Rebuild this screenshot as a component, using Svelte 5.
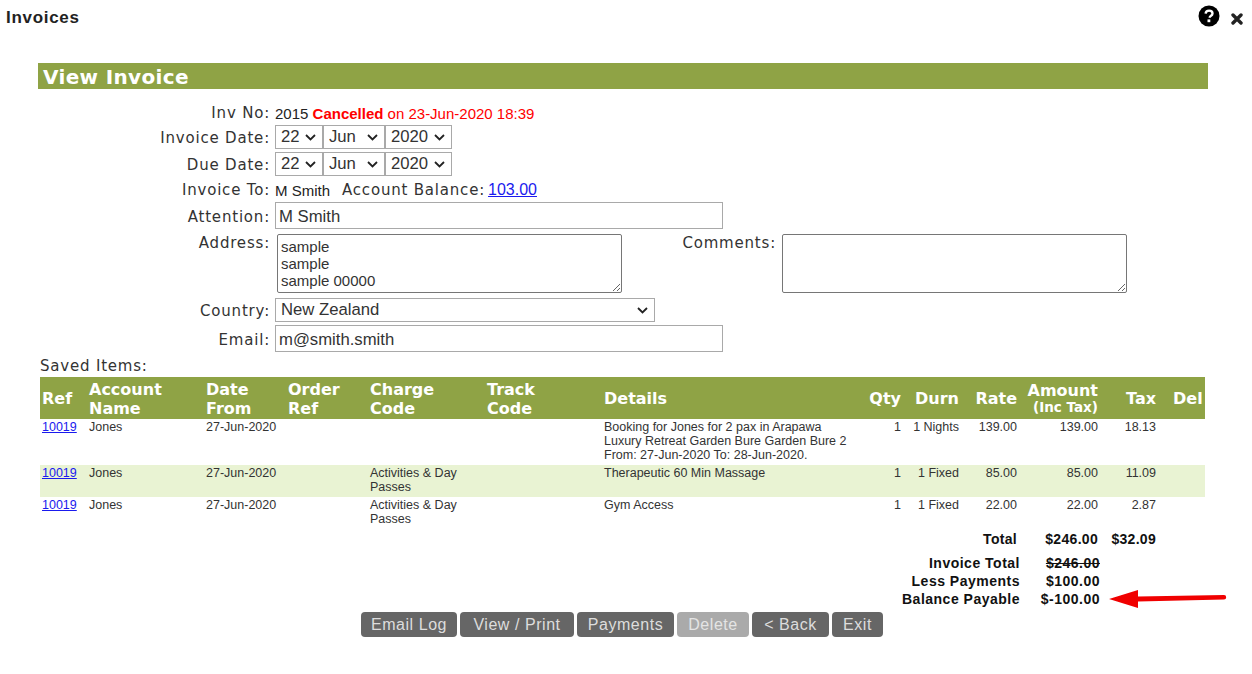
<script>
    const items = [
        { ref: '10019', name: 'Jones', from: '27-Jun-2020', charge: '', details: ['Booking for Jones for 2 pax in Arapawa', 'Luxury Retreat Garden Bure Garden Bure 2', 'From: 27-Jun-2020 To: 28-Jun-2020.'], qty: 1, durn: '1 Nights', rate: '139.00', amount: '139.00', tax: '18.13' },
        { ref: '10019', name: 'Jones', from: '27-Jun-2020', charge: 'Activities & Day Passes', details: ['Therapeutic 60 Min Massage'], qty: 1, durn: '1 Fixed', rate: '85.00', amount: '85.00', tax: '11.09' },
        { ref: '10019', name: 'Jones', from: '27-Jun-2020', charge: 'Activities & Day Passes', details: ['Gym Access'], qty: 1, durn: '1 Fixed', rate: '22.00', amount: '22.00', tax: '2.87' }
    ];

    const buttons = [
        { label: 'Email Log', width: 96 },
        { label: 'View / Print', width: 114 },
        { label: 'Payments', width: 97 },
        { label: 'Delete', width: 72, disabled: true },
        { label: '< Back', width: 77 },
        { label: 'Exit', width: 51 }
    ];
</script>

<div class="page">
    <header class="topbar">
        <span class="title">Invoices</span>
        <div class="tools">
            <svg class="help" width="22" height="22" viewBox="0 0 22 22">
                <circle cx="11" cy="11" r="10.5" fill="#000" />
                <path d="M7.6 8.6c.2-2 1.6-3 3.5-3 2 0 3.4 1.1 3.4 2.8 0 1.4-.8 2-1.8 2.7-.8.5-1 .9-1 1.7" fill="none" stroke="#fff" stroke-width="2.4" />
                <rect x="9.5" y="14.4" width="2.8" height="2.8" fill="#fff" />
            </svg>
            <svg class="close" width="12" height="12" viewBox="0 0 12 12">
                <path d="M2 2l8 8M10 2l-8 8" stroke="#222" stroke-width="3.4" stroke-linecap="round" />
            </svg>
        </div>
    </header>

    <main class="panel">
        <h1>View Invoice</h1>

        <div class="form">
            <div class="row inv">
                <span class="label">Inv No:</span>
                <span class="value">2015 <span class="cancel"><b>Cancelled</b> on 23-Jun-2020 18:39</span></span>
            </div>
            <div class="row date">
                <span class="label low">Invoice Date:</span>
                <div class="dates">
                    <select class="d"><option>22</option></select>
                    <select class="m"><option>Jun</option></select>
                    <select class="y"><option>2020</option></select>
                </div>
            </div>
            <div class="row date">
                <span class="label low">Due Date:</span>
                <div class="dates">
                    <select class="d"><option>22</option></select>
                    <select class="m"><option>Jun</option></select>
                    <select class="y"><option>2020</option></select>
                </div>
            </div>
            <div class="row to">
                <span class="label">Invoice To:</span>
                <span class="value small">M Smith</span>
                <span class="label-inline">Account Balance:</span>
                <a href="#balance" class="balance">103.00</a>
            </div>
            <div class="row attention">
                <span class="label low">Attention:</span>
                <input class="wide" value="M Smith" />
            </div>
            <div class="row address">
                <span class="label">Address:</span>
                <textarea class="addr">sample
sample
sample 00000</textarea>
                <span class="label comments">Comments:</span>
                <textarea class="comm"></textarea>
            </div>
            <div class="row country">
                <span class="label low">Country:</span>
                <select class="country-select"><option>New Zealand</option></select>
            </div>
            <div class="row email">
                <span class="label low">Email:</span>
                <input class="wide" value="m@smith.smith" />
            </div>
        </div>

        <div class="saved">Saved Items:</div>

        <table>
            <colgroup>
                <col style="width:47px" /><col style="width:117px" /><col style="width:82px" /><col style="width:82px" /><col style="width:117px" /><col style="width:117px" /><col style="width:263px" /><col style="width:36px" /><col style="width:58px" /><col style="width:58px" /><col style="width:81px" /><col style="width:58px" /><col style="width:49px" />
            </colgroup>
            <thead>
                <tr>
                    <th>Ref</th>
                    <th>Account Name</th>
                    <th>Date From</th>
                    <th>Order Ref</th>
                    <th>Charge Code</th>
                    <th>Track<br />Code</th>
                    <th>Details</th>
                    <th class="num">Qty</th>
                    <th class="num">Durn</th>
                    <th class="num">Rate</th>
                    <th class="num amount">Amount<small>(Inc Tax)</small></th>
                    <th class="num">Tax</th>
                    <th class="del">Del</th>
                </tr>
            </thead>
            <tbody>
                {#each items as item, i}
                    <tr class:alt={i === 1}>
                        <td><a href="#ref">{item.ref}</a></td>
                        <td>{item.name}</td>
                        <td>{item.from}</td>
                        <td></td>
                        <td>{item.charge}</td>
                        <td></td>
                        <td>{#each item.details as line}<div>{line}</div>{/each}</td>
                        <td class="num">{item.qty}</td>
                        <td class="num">{item.durn}</td>
                        <td class="num">{item.rate}</td>
                        <td class="num">{item.amount}</td>
                        <td class="num">{item.tax}</td>
                        <td></td>
                    </tr>
                {/each}
            </tbody>
            <tfoot>
                <tr>
                    <td colspan="10" class="num">Total</td>
                    <td class="num">$246.00</td>
                    <td class="num">$32.09</td>
                    <td></td>
                </tr>
            </tfoot>
        </table>

        <div class="summary">
            <span>Invoice Total</span><s>$246.00</s>
            <span>Less Payments</span><span>$100.00</span>
            <span>Balance Payable</span><span>$-100.00</span>
            <svg class="arrow" width="120" height="20" viewBox="0 0 120 20">
                <path d="M1 10L30 1v6.5l86-1.5a2.2 2.2 0 0 1 0 4.4L30 12.5V19z" fill="#f00000" />
            </svg>
        </div>

        <div class="actions">
            {#each buttons as b}
                <button class:disabled={b.disabled} style="width:{b.width}px">{b.label}</button>
            {/each}
        </div>
    </main>
</div>

<style>
    :global(body) {
        margin: 0;
        background: #fff;
        font-family: "Liberation Sans", Arial, sans-serif;
        color: #222;
    }
    .page {
        height: 674px;
        overflow: hidden;
    }
    .topbar {
        display: flex;
        justify-content: space-between;
        height: 63px;
        padding: 0 9px 0 6px;
    }
    .title {
        font-weight: 700;
        font-size: 17px;
        line-height: 18px;
        margin-top: 9px;
        letter-spacing: 0.7px;
    }
    .tools {
        display: flex;
        align-items: flex-start;
        gap: 11px;
    }
    .help {
        margin-top: 5px;
    }
    .close {
        margin-top: 13px;
    }
    .panel {
        position: relative;
        margin: 0 44px 0 38px;
    }
    h1 {
        margin: 0;
        height: 26px;
        padding-left: 5px;
        background: #8fa345;
        color: #fff;
        font: 700 20px/28px "DejaVu Sans", Verdana, sans-serif;
        letter-spacing: 0.35px;
    }
    .form {
        padding-top: 11px;
    }
    .row {
        display: flex;
        align-items: center;
    }
    .label,
    .label-inline,
    .saved {
        font-family: "DejaVu Sans", Verdana, sans-serif;
        font-size: 15px;
        letter-spacing: 0.8px;
        color: #333;
    }
    .label {
        flex: none;
        width: 232px;
        margin-right: 5px;
        text-align: right;
    }
    .low {
        padding-top: 2px;
    }
    .inv {
        height: 24px;
        margin-top: 1px;
    }
    .date {
        height: 24px;
        margin-bottom: 3px;
    }
    .to {
        height: 22px;
    }
    .value {
        font-size: 15px;
    }
    .small {
        margin-right: 12px;
    }
    .cancel {
        color: #f00;
    }
    .label-inline {
        margin-right: 3px;
    }
    .balance {
        font-size: 16px;
        color: #1a1aee;
    }
    .dates {
        display: flex;
    }
    select,
    input,
    textarea {
        box-sizing: border-box;
        font-family: "Liberation Sans", Arial, sans-serif;
        font-size: 16.7px;
        color: #333;
        background: #fff;
        border: 1px solid #a9a9a9;
        margin: 0;
        border-radius: 0;
        outline: none;
    }
    select {
        appearance: none;
        padding: 0 0 0 5px;
        background: #fff url("data:image/svg+xml,%3Csvg xmlns='http://www.w3.org/2000/svg' width='11' height='7'%3E%3Cpath d='M1 1l4.5 4.5L10 1' fill='none' stroke='%23222' stroke-width='1.8'/%3E%3C/svg%3E") no-repeat right 6px center;
    }
    .dates select {
        height: 24px;
        padding-bottom: 1px;
    }
    .d {
        width: 48px;
    }
    .m {
        width: 62px;
    }
    .y {
        width: 67px;
    }
    .attention {
        height: 27px;
        margin-top: 1px;
    }
    .wide {
        width: 448px;
        height: 27px;
        padding: 2px 3px 0;
    }
    .address {
        align-items: flex-start;
        margin-top: 5px;
        height: 59px;
    }
    .address .label {
        margin-right: 7px;
        line-height: 18px;
    }
    textarea {
        height: 59px;
        width: 345px;
        padding: 3px 3px 0;
        border: 1px solid #767676;
        border-radius: 2px;
        font-size: 15px;
        line-height: 17px;
        resize: both;
        overflow: hidden;
    }
    .address .comments {
        width: 154px;
        margin-right: 6px;
    }
    .country {
        height: 24px;
        margin-top: 5px;
    }
    .country-select {
        width: 380px;
        height: 24px;
        padding-bottom: 2px;
    }
    .email {
        height: 27px;
        margin-top: 3px;
    }
    .saved {
        margin: 4px 0 0 2px;
        height: 21px;
        line-height: 20px;
    }
    table {
        table-layout: fixed;
        border-collapse: collapse;
        width: 1165px;
        margin-left: 2px;
        font-size: 12.5px;
        line-height: 14px;
    }
    th {
        height: 42px;
        padding: 1px 2px 0;
        box-sizing: border-box;
        background: #8fa345;
        color: #fff;
        font: 700 16px/19px "DejaVu Sans", Verdana, sans-serif;
        text-align: left;
        vertical-align: middle;
    }
    th.del {
        padding-left: 17px;
        white-space: nowrap;
    }
    th.amount {
        white-space: nowrap;
        line-height: 17px;
    }
    th small {
        display: block;
        font-size: 13.5px;
        line-height: 16px;
    }
    td {
        padding: 1px 2px 3px;
        vertical-align: top;
        color: #333;
    }
    th.num,
    td.num {
        text-align: right;
        padding-right: 0;
    }
    tr.alt td {
        background: #e9f3d3;
        height: 28px;
    }
    td a {
        color: #1a1aee;
    }
    tfoot td {
        padding: 0 2px;
        height: 20px;
        font-size: 14px;
        font-weight: 700;
        line-height: 20px;
        color: #111;
        letter-spacing: 0.3px;
    }
    .summary {
        position: relative;
        display: grid;
        grid-template-columns: 982px 80px;
        justify-items: end;
        margin-top: 5px;
        font-size: 14px;
        font-weight: 700;
        line-height: 18px;
        letter-spacing: 0.5px;
        color: #111;
    }
    .arrow {
        position: absolute;
        left: 1070px;
        top: 35px;
    }
    .actions {
        display: flex;
        justify-content: center;
        gap: 3px;
        margin: 4px 2px 0 0;
    }
    button {
        height: 25px;
        padding: 0;
        border: none;
        border-radius: 4px;
        background: #666;
        color: #ddd;
        font-family: "Liberation Sans", Arial, sans-serif;
        font-size: 16px;
        letter-spacing: 0.55px;
    }
    button.disabled {
        background: #aaa;
        color: #e4e4e4;
    }
</style>
